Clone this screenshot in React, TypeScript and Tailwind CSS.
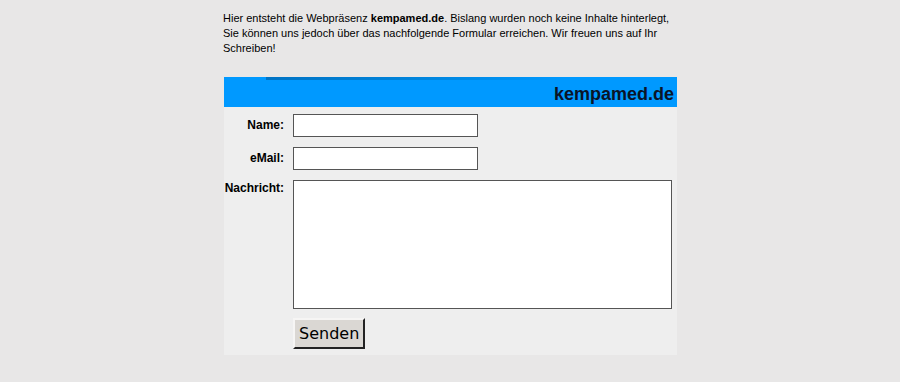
import React from "react";

export default function App() {
  return (
    <div className="min-h-screen bg-[#e8e7e7] font-['Liberation_Sans',Arial,sans-serif] text-black">
      <div className="mx-auto w-[454px] pt-[11px]">
        <p className="text-[11px] leading-[15px] pr-[6px]">
          Hier entsteht die Webpräsenz <b>kempamed.de</b>. Bislang wurden noch keine Inhalte hinterlegt,
          Sie können uns jedoch über das nachfolgende Formular erreichen. Wir freuen uns auf Ihr
          Schreiben!
        </p>

        <div className="mt-[21px] ml-[1px] w-[453px] bg-[#eeeeee] pb-[6px]">
          <div className="relative h-[30px] bg-[#0099ff] flex items-end justify-end pr-[3px] pb-[4px]">
            <div className="absolute top-0 left-[42px] w-[300px] h-[3px] bg-gradient-to-r from-[#0073c4] via-[#0084dc] to-[#0099ff]" />
            <span className="text-[18px] font-bold leading-none text-[#0a1428]">kempamed.de</span>
          </div>

          <form className="grid grid-cols-[60px_1fr] gap-x-[9px] gap-y-[10px] pt-[7px]">
            <label className="text-[12px] font-bold text-right self-center -mt-[1px]">Name:</label>
            <input className="w-[185px] h-[23px] bg-white border border-[#555] outline-none" />

            <label className="text-[12px] font-bold text-right self-center -mt-[1px]">eMail:</label>
            <input className="w-[185px] h-[23px] bg-white border border-[#555] outline-none" />

            <label className="text-[12px] font-bold text-right -mt-[1px]">Nachricht:</label>
            <textarea className="w-[379px] h-[129px] bg-white border border-[#555] outline-none resize-none" />

            <div />
            <div className="-mt-[1px]">
              <button
                type="button"
                className="h-[31px] px-[4px] bg-[#dad7d3] text-[16px] font-['DejaVu_Sans',sans-serif] border-2 border-t-[#f6f5f4] border-l-[#f6f5f4] border-r-[#222] border-b-[#222]"
              >
                Senden
              </button>
            </div>
          </form>
        </div>
      </div>
    </div>
  );
}
